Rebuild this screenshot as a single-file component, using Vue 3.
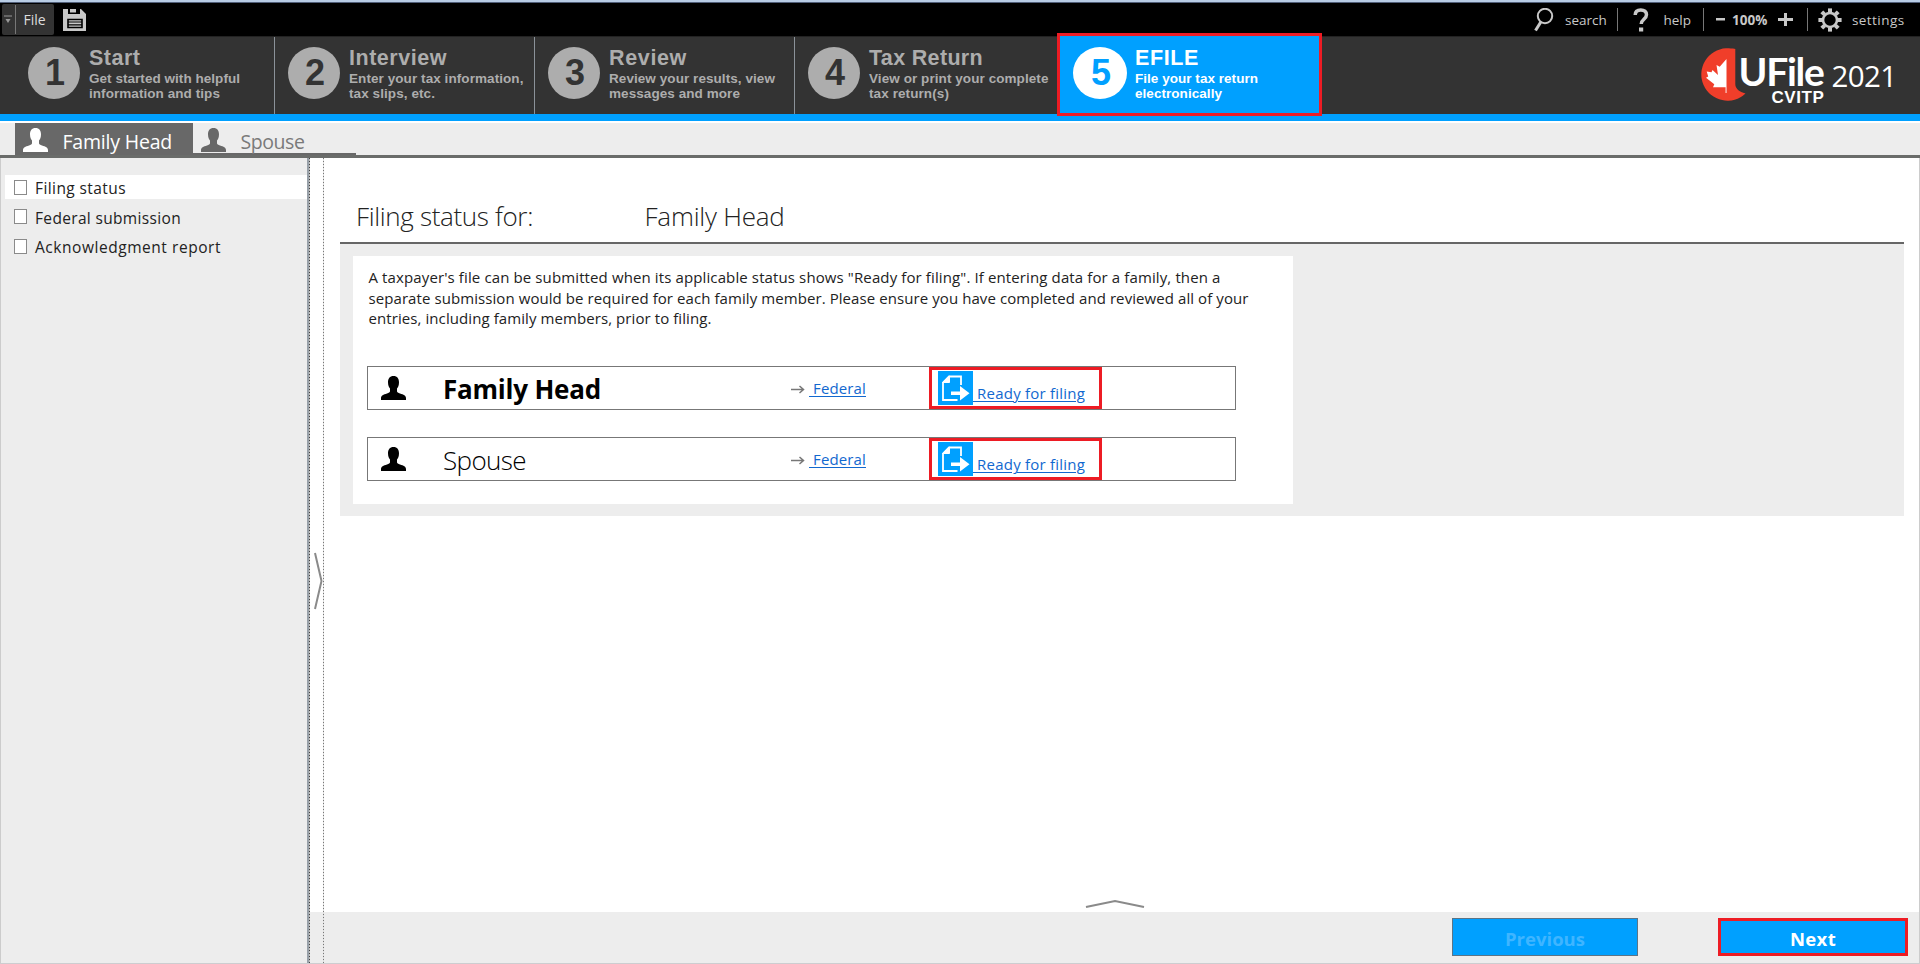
<script setup>
const steps = [
  { n: 1, title: 'Start', tw: 51.5, lines: [['Get started with helpful', 151], ['information and tips', 131]] },
  { n: 2, title: 'Interview', tw: 98, lines: [['Enter your tax information,', 174.5], ['tax slips, etc.', 86]] },
  { n: 3, title: 'Review', tw: 78, lines: [['Review your results, view', 166], ['messages and more', 131]] },
  { n: 4, title: 'Tax Return', tw: 114, lines: [['View or print your complete', 179.5], ['tax return(s)', 80]] },
  { n: 5, title: 'EFILE', tw: 64, active: true, lines: [['File your tax return', 123], ['electronically', 87]] },
]
const pages = [
  { label: 'Filing status', w: 91, selected: true },
  { label: 'Federal submission', w: 146 },
  { label: 'Acknowledgment report', w: 186 },
]
const intro = [
  ['A taxpayer\'s file can be submitted when its applicable status shows "Ready for filing". If entering data for a family, then a', 852],
  ['separate submission would be required for each family member. Please ensure you have completed and reviewed all of your', 880],
  ['entries, including family members, prior to filing.', 343],
]
const members = [
  { name: 'Family Head', w: 158, head: true },
  { name: 'Spouse', w: 83 },
]
const person =
  'M12.5 0C16.3 0 18 2.6 18 6.2c0 3.400-1 5-2 6.300v2.700c0 1.200 1.300 1.700 3 2.300 3.600 1.200 6 2 6 4.500v2H0v-2c0-2.500 2.400-3.300 6-4.500 1.700-.6 3-1.100 3-2.300v-2.700C8 11.200 7 9.600 7 6.200 7 2.600 8.700 0 12.500 0z'

// Spreads or tightens the letters so that a label takes the given width.
const vFit = {
  mounted(el, { value }) {
    const natural = el.getBoundingClientRect().width
    el.style.letterSpacing = (value - natural) / el.textContent.length + 'px'
  },
}
</script>

<template>
  <div class="app">
    <div class="strip"></div>
    <header class="topbar">
      <div class="file">
        <span class="drop"><svg width="8" height="10" viewBox="0 0 8 10"><path d="M0 1h8" stroke="#999" /><path d="M1.500 4h5L4 8z" fill="#999" /></svg></span>
        <span class="file-label"><span v-fit="22" class="fit">File</span></span>
      </div>
      <svg class="save" width="23" height="22" viewBox="0 0 23 22">
        <path d="M0 0h5v5h12V0h1l5 5v17H0z" fill="#c8c8c8" />
        <path d="M7 0h6v3.500H7z" fill="#c8c8c8" />
        <path d="M5 10.500h14v8H5z" fill="#c8c8c8" stroke="#000" stroke-width="1.600" /><path d="M5 13h14M5 15.800h14" stroke="#000" stroke-width="1.200" />
      </svg>
      <div class="tools">
        <svg class="i-search" width="20" height="24" viewBox="0 0 20 24" fill="none" stroke="#c8c8c8"><circle cx="11" cy="8" r="7.200" stroke-width="2" /><path d="M6.800 14L1.500 22.500" stroke-width="3" /></svg>
        <span v-fit="43" class="fit t-search">search</span>
        <i class="bar b1"></i>
        <svg class="i-help" width="16" height="24" viewBox="0 0 16 24"><path d="M2.200 7C2.200 3.500 4.500 1.900 7.800 1.900c3.400 0 5.700 1.800 5.700 4.800 0 4.500-5.300 4.600-5.300 9.300" fill="none" stroke="#c8c8c8" stroke-width="3.500" /><rect x="6" y="19.500" width="4.200" height="4" fill="#c8c8c8" /></svg>
        <span v-fit="29" class="fit t-help">help</span>
        <i class="bar b2"></i>
        <svg class="i-minus" width="9" height="3"><rect width="9" height="2.500" fill="#c8c8c8" /></svg>
        <span v-fit="38" class="fit t-zoom">100%</span>
        <svg class="i-plus" width="15" height="13" viewBox="0 0 15 13"><path d="M7.500 0v13M0 6.500h15" stroke="#c8c8c8" stroke-width="3" /></svg>
        <i class="bar b3"></i>
        <svg class="i-gear" width="24" height="24" viewBox="-12 -12 24 24" stroke="#c8c8c8" fill="none">
          <circle r="7" stroke-width="2.600" />
          <path v-for="a in 8" :key="a" d="M0-7.500V-11.600" stroke-width="4" :transform="`rotate(${a * 45})`" />
        </svg>
        <span v-fit="52.5" class="fit t-settings">settings</span>
      </div>
    </header>

    <nav class="steps">
      <div v-for="s in steps" :key="s.n" :class="['step', 's' + s.n, { active: s.active }]">
        <span class="num"><b>{{ s.n }}</b></span>
        <div class="step-text">
          <div class="step-title"><span v-fit="s.tw" class="fit">{{ s.title }}</span></div>
          <div v-for="l in s.lines" :key="l[0]" class="step-line"><span v-fit="l[1]" class="fit">{{ l[0] }}</span></div>
        </div>
      </div>
      <div class="logo">
        <svg class="mark" width="47" height="53" viewBox="0 0 47 53">
          <path d="M36.300 1V36c0 4.500 4 8 10.200 9.500A26.200 26.200 0 1 1 27 .3c4 0 6 .1 9.300.7z" fill="#f03e2a" />
          <path d="M27.500 11v34h-.9v-5.800L14 39.300l1.300-3L7 29.800l2.200-1.300-1.500-5 4.800.8 1-2.300 5.500 5-1.500-10 3.200 1.800z" fill="#fff" />
        </svg>
        <div class="words">
          <span class="ufile"><span v-fit="85" class="fit">UFile</span></span>
          <span class="cvitp"><span v-fit="53" class="fit">CVITP</span></span>
        </div>
        <span v-fit="65" class="fit year">2021</span>
      </div>
    </nav>

    <div class="tabs">
      <div class="tab on">
        <svg width="25" height="24" viewBox="0 0 25 24"><path :d="person" fill="#fff" /></svg>
        <span v-fit="109.5" class="fit">Family Head</span>
      </div>
      <div class="tab">
        <svg width="25" height="24" viewBox="0 0 25 24"><path :d="person" fill="#686868" /></svg>
        <span v-fit="64" class="fit">Spouse</span>
      </div>
    </div>

    <div class="body">
      <aside>
        <div v-for="p in pages" :key="p.label" :class="['page', { selected: p.selected }]">
          <i class="box"></i><span v-fit="p.w" class="fit">{{ p.label }}</span>
        </div>
      </aside>
      <div class="splitter"><svg width="10" height="58" viewBox="0 0 10 58"><path d="M1 1l6.500 28L1 57" fill="none" stroke="#8a8a8a" stroke-width="2" /></svg></div>
      <main>
        <h1><span class="h-a"><span v-fit="177" class="fit">Filing status for:</span></span><span v-fit="140" class="fit">Family Head</span></h1>
        <section class="panel">
          <div class="card">
            <div class="intro"><div v-for="l in intro" :key="l[0]"><span v-fit="l[1]" class="fit">{{ l[0] }}</span></div></div>
            <div v-for="m in members" :key="m.name" class="member">
              <svg class="who" width="25" height="24" viewBox="0 0 25 24"><path :d="person" /></svg>
              <span class="name" :class="{ head: m.head }"><span v-fit="m.w" class="fit">{{ m.name }}</span></span>
              <svg class="arrow" width="14" height="9" viewBox="0 0 14 9" fill="none" stroke="#777" stroke-width="1.500"><path d="M0 4.500h12M8.500 1l4 3.500-4 3.500" /></svg>
              <a class="federal"><span v-fit="57" class="fit">&nbsp;Federal</span></a>
              <div class="ready">
                <svg width="35" height="34" viewBox="0 0 35 34">
                  <rect width="35" height="34" fill="#00a0ff" />
                  <path d="M23 14V5.500H11L5 11.500v17.500H19.500" fill="none" stroke="#fff" stroke-width="1.800" />
                  <path d="M11.500 5v6.500H4.500z" fill="#fff" stroke="#fff" />
                  <path d="M13 20.500h9v-5.500l9.500 7.200-9.500 7.300v-5.500h-9z" fill="#fff" />
                </svg>
                <a><span v-fit="112" class="fit">&nbsp;Ready for filing</span></a>
              </div>
            </div>
          </div>
        </section>
        <svg class="up" width="60" height="10" viewBox="0 0 60 10"><path d="M1 8l29-6 29 6" fill="none" stroke="#8a8a8a" stroke-width="2.200" /></svg>
        <footer>
          <button class="prev"><span v-fit="80" class="fit">Previous</span></button>
          <button class="next"><span v-fit="46" class="fit">Next</span></button>
        </footer>
      </main>
    </div>
  </div>
</template>

<style>
body { margin: 0; overflow: hidden; }
</style>

<style scoped>
* { box-sizing: border-box; }
.app { width: 1920px; height: 964px; display: flex; flex-direction: column; background: #fff; font-family: "Open Sans", "Noto Sans", sans-serif; font-size: 15px; color: #222; overflow: hidden; border-bottom: 1px solid #cdcdd0; }
.fit { display: inline-block; white-space: pre; text-decoration: inherit; }
svg { display: block; flex: none; }
.strip { height: 3px; flex: none; background: #b9cde5; border-bottom: 1px solid #52607a; }
.topbar { height: 33px; flex: none; background: #000; display: flex; align-items: center; color: #c8c8c8; font-size: 13.5px; }
.file { display: flex; height: 31px; width: 52px; margin-left: 1.5px; background: #333; border-radius: 2px; align-items: center; }
.drop { width: 14px; height: 29px; border-right: 1px solid #777; display: flex; align-items: center; justify-content: center; }
.file-label { margin-left: 8px; font-size: 14px; color: #ddd; }
.save { margin-left: 9.500px; }
.tools { margin-left: auto; width: 386.500px; display: flex; align-items: center; flex: none; }
.bar { width: 1px; height: 23px; background: #777; flex: none; }
.t-search { margin-left: 11.500px; width: 43px; }
.b1 { margin-left: 8.500px; }
.i-help { margin-left: 15px; }
.t-help { margin-left: 15px; width: 29px; }
.b2 { margin-left: 10px; }
.i-minus { margin-left: 12px; }
.t-zoom { margin-left: 7.500px; width: 38px; font-weight: 700; }
.i-plus { margin-left: 8px; }
.b3 { margin-left: 14px; }
.i-gear { margin-left: 9.500px; }
.t-settings { margin-left: 10.500px; }

.steps { height: 78px; flex: none; background: #333; border-top: 1px solid #222; display: flex; position: relative; font-family: "Liberation Sans", Arial, sans-serif; font-weight: 700; color: #adadad; }
.step { display: flex; border-right: 1px solid #8b9299; padding: 0 0 0 13px; height: 77px; flex: none; }
.s1 { width: 275px; padding-left: 28px; }
.s2, .s3 { width: 260px; }
.s4 { width: 262px; border-right: 0; }
.num { width: 52px; height: 52px; border-radius: 50%; background: #adadad; color: #333; margin-top: 10px; display: flex; justify-content: center; font-size: 36px; line-height: 52px; padding-left: 2px; }
.num b { font-weight: 700; }
.step-text { margin-left: 9px; padding-top: 10px; }
.step-title { font-size: 21.500px; line-height: 22px; margin-bottom: 2px; }
.step-line { font-size: 13.500px; line-height: 15px; }
.active { width: 265px; height: 83px; margin-top: -4px; border: 3px solid #ed1c24; background: #00a0ff; color: #fff; z-index: 2; }
.active .num { background: #fff; color: #00a0ff; width: 54px; margin-top: 11px; }
.active .step-text { padding-top: 11px; margin-left: 8px; }
.logo { margin-left: auto; display: flex; width: 221px; color: #fff; font-weight: 400; padding-top: 11px; }
.words { display: flex; flex-direction: column; margin-left: -7.500px; width: 86px; }
.ufile { font-family: Lato, sans-serif; font-weight: 700; font-size: 39px; line-height: 38px; margin-top: 4px; height: 39px; }
.cvitp { font-weight: 700; font-size: 17px; line-height: 14px; align-self: flex-end; }
.year { font-family: "Open Sans", sans-serif; font-size: 29.500px; line-height: 40px; margin: 8px 0 0 7px; height: 40px; }

.tabs { height: 44px; flex: none; border-top: 7px solid #00a0ff; background: linear-gradient(#fff 1.500px, #ededed 1.500px); display: flex; align-items: flex-start; padding: 2px 0 0 15px; border-bottom: 3px solid #6a6c6a; }
.tab { height: 32px; width: 163px; display: flex; align-items: center; color: #7a7a7a; font-size: 19.500px; border-bottom: 2px solid #686868; padding-left: 8px; }
.tab svg { margin-right: 14.500px; margin-top: 4px; }
.tab .fit { line-height: 24px; margin-top: 7px; }
.tab.on { background: #686868; color: #fff; width: 178px; padding-left: 8px; }

.body { flex: 1; display: flex; min-height: 0; }
aside { width: 309px; background: #ededed; border-right: 2px solid #98a0a8; border-left: 1px solid #ccc; padding: 17px 0 0 4px; flex: none; }
.page { height: 24px; margin-bottom: 5.500px; display: flex; align-items: center; padding-left: 9px; font-size: 15.500px; line-height: 24px; }
.page .fit { margin-top: 2px; }
.selected { background: #fff; }
.box { width: 13px; height: 15px; border: 1.500px solid #8a8a8a; background: #fff; margin-right: 8px; flex: none; }
.splitter { width: 15px; flex: none; display: flex; align-items: center; padding-left: 5px; background: repeating-linear-gradient(#444 0 1.500px, #bbb 1.500px 3px) 0 0 / 1px 100% no-repeat, repeating-linear-gradient(#777 0 1.500px, #ddd 1.500px 3px) 100% 0 / 1px 100% no-repeat, linear-gradient(#fff calc(100% - 51px), #ededed 0); }
.splitter svg { margin-top: 41px; }
main { flex: 1; display: flex; flex-direction: column; min-width: 0; border-right: 1px solid #ccc; }
h1 { margin: 0 15px 0 16px; height: 86px; flex: none; border-bottom: 2.500px solid #666; font-weight: 300; font-size: 26px; line-height: 36px; padding: 40px 0 0 16px; display: flex; color: #222; }
.h-a { width: 288.500px; }
.panel { margin: 0 15px 0 16px; height: 272px; background: #ededed; flex: none; padding: 12px 12.500px; }
.card { width: 940px; height: 248px; background: #fff; padding: 11px 0 0 14.500px; }
.intro { padding-left: 1.500px; font-size: 15px; line-height: 20.500px; height: 99px; }
.member { width: 869px; height: 44px; border: 1.500px solid #777; display: flex; align-items: center; margin-bottom: 27.200px; color: #000; }
.who { margin-left: 12.500px; }
.name { width: 348px; margin-left: 37.500px; font-size: 26px; line-height: 40px; font-weight: 300; padding-top: 2px; flex: none; }
.name.head { font-weight: 700; }
.arrow { margin-top: 2px; }
a { color: #1268cf; text-decoration: underline; text-underline-offset: 2px; text-decoration-thickness: 1px; }
.federal { margin-left: 4px; width: 120px; line-height: 24px; }
.ready { border: 3px solid #ed1c24; width: 173px; height: 42px; display: flex; padding-left: 6px; align-items: flex-start; margin-left: 0; flex: none; }
.ready a { line-height: 24px; margin-top: 11px; }
.ready svg { margin-top: 1px; }
.up { margin: auto 0 3px 761px; }
footer { height: 51px; background: #ededed; display: flex; flex: none; align-items: flex-start; padding: 6px 11px 0 0; justify-content: flex-end; }
button { font-family: inherit; font-weight: 700; font-size: 18.500px; line-height: 32px; padding: 4px 0 0; margin: 0; background: #00a0ff; color: #fff; height: 38px; }
.prev { width: 186px; border: 1.500px solid #5c7486; color: #3fb5ff; margin-right: 80px; }
.next { width: 190px; border: 3px solid #ed1c24; padding-top: 2px; }
</style>
